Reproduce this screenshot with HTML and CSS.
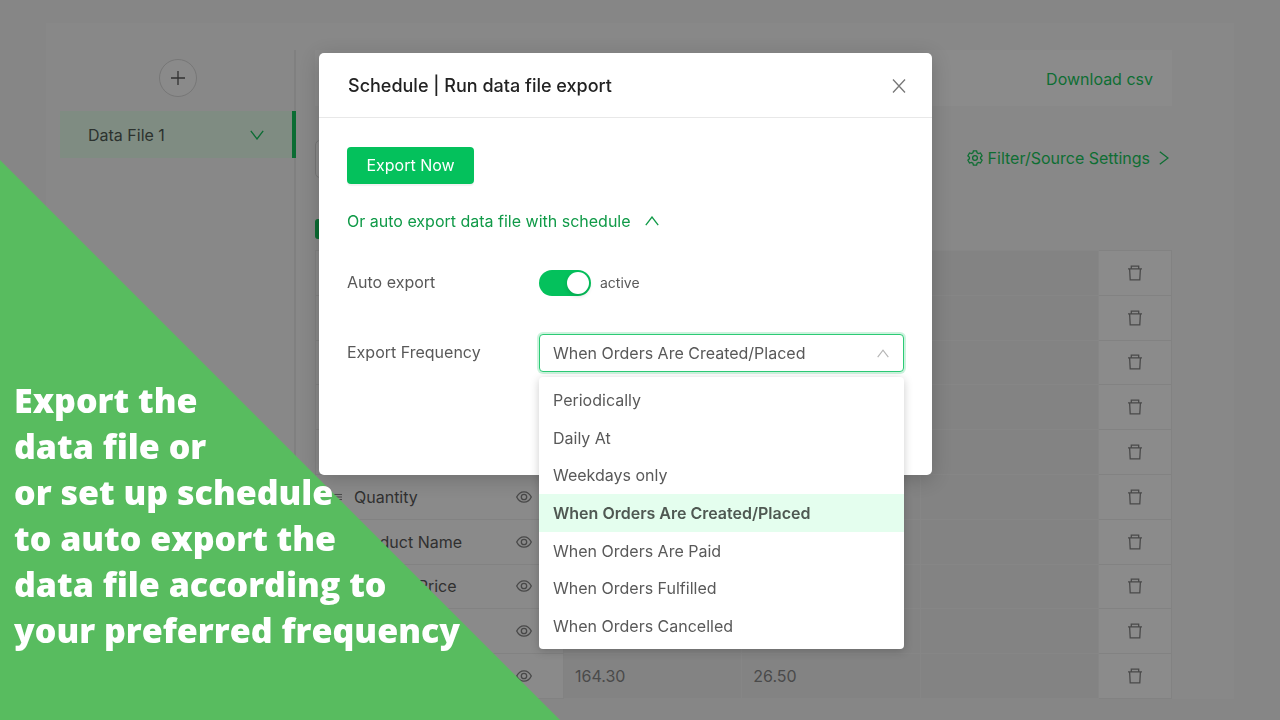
FILE: index.html
```html
<!DOCTYPE html>
<html lang="en">
<head>
    <meta charset="UTF-8">
    <meta name="viewport" content="width=device-width, initial-scale=1.0">
    <title>Schedule | Run data file export</title>
    <link rel="stylesheet" href="styles.css">
</head>
<body>
    <!-- icons -->
    <svg class="sprite" aria-hidden="true">
        <symbol id="i-trash" viewBox="0 0 16 16"><path d="M1 3.800h14M4.300 3.800V1.200h7.400v2.600M2.600 3.800l.6 11h9.600l.6-11" /></symbol>
        <symbol id="i-eye" viewBox="0 0 16 12"><path d="M.7 6C2.400 2.500 4.900.8 8 .8S13.600 2.500 15.300 6C13.600 9.500 11.100 11.200 8 11.200S2.400 9.500.7 6z" /><circle cx="8" cy="6" r="2.700" /></symbol>
        <symbol id="i-down" viewBox="0 0 14 10"><path d="M.8.8L7 9 13.200.8" /></symbol>
        <symbol id="i-up" viewBox="0 0 14 10"><path d="M.8 9.200L7 1l6.200 8.200" /></symbol>
        <symbol id="i-right" viewBox="0 0 10 14"><path d="M.8.8L9 7 .8 13.200" /></symbol>
        <symbol id="i-gear" viewBox="0 0 16 16"><path d="M6.400.8h3.200l.5 2 1.400.8 2-.6 1.600 2.800-1.500 1.400v1.600l1.500 1.400-1.600 2.800-2-.6-1.400.8-.5 2H6.400l-.5-2-1.400-.8-2 .6L.9 10.200l1.500-1.400V7.200L.9 5.800 2.500 3l2 .6 1.400-.8z" /><circle cx="8" cy="8" r="2.400" /></symbol>
        <symbol id="i-drag" viewBox="0 0 16 12"><path d="M0 1.500h16M0 6h16M0 10.500h16" /></symbol>
    </svg>

    <div class="page">
        <aside class="sidebar">
            <button class="add-btn" aria-label="Add data file">
                <svg viewBox="0 0 14 14"><path d="M7 0v14M0 7h14" /></svg>
            </button>
            <a href="#" class="file-item">
                Data File 1
                <svg class="chevron"><use href="#i-down" /></svg>
            </a>
        </aside>

        <main class="main">
            <div class="topbar">
                <a href="#">Download csv</a>
            </div>
            <div class="toolbar">
                <input type="text" class="search" aria-label="File name">
                <a href="#" class="settings">
                    <svg class="gear"><use href="#i-gear" /></svg>
                    Filter/Source Settings
                    <svg class="arrow"><use href="#i-right" /></svg>
                </a>
            </div>
            <input type="checkbox" class="check-all" aria-label="Select all" checked>

            <table class="fields">
                <tr><td class="name"></td><td></td><td></td><td></td><td class="del"><svg><use href="#i-trash" /></svg></td></tr>
                <tr><td class="name"></td><td></td><td></td><td></td><td class="del"><svg><use href="#i-trash" /></svg></td></tr>
                <tr><td class="name"></td><td></td><td></td><td></td><td class="del"><svg><use href="#i-trash" /></svg></td></tr>
                <tr><td class="name"></td><td></td><td></td><td></td><td class="del"><svg><use href="#i-trash" /></svg></td></tr>
                <tr><td class="name"></td><td></td><td></td><td></td><td class="del"><svg><use href="#i-trash" /></svg></td></tr>
                <tr>
                    <td class="name"><div class="cell"><svg class="drag"><use href="#i-drag" /></svg>Quantity<svg class="eye"><use href="#i-eye" /></svg></div></td>
                    <td></td><td></td><td></td>
                    <td class="del"><svg><use href="#i-trash" /></svg></td>
                </tr>
                <tr>
                    <td class="name"><div class="cell"><svg class="drag"><use href="#i-drag" /></svg>Product Name<svg class="eye"><use href="#i-eye" /></svg></div></td>
                    <td></td><td></td><td></td>
                    <td class="del"><svg><use href="#i-trash" /></svg></td>
                </tr>
                <tr>
                    <td class="name"><div class="cell"><svg class="drag"><use href="#i-drag" /></svg>Product Price<svg class="eye"><use href="#i-eye" /></svg></div></td>
                    <td></td><td></td><td></td>
                    <td class="del"><svg><use href="#i-trash" /></svg></td>
                </tr>
                <tr>
                    <td class="name"><div class="cell"><svg class="eye"><use href="#i-eye" /></svg></div></td>
                    <td></td><td></td><td></td>
                    <td class="del"><svg><use href="#i-trash" /></svg></td>
                </tr>
                <tr>
                    <td class="name"><div class="cell"><svg class="eye"><use href="#i-eye" /></svg></div></td>
                    <td>164.30</td><td>26.50</td><td></td>
                    <td class="del"><svg><use href="#i-trash" /></svg></td>
                </tr>
            </table>
        </main>
    </div>

    <div class="overlay">
        <div class="modal" role="dialog" aria-labelledby="modalTitle">
            <div class="modal-header">
                <h2 id="modalTitle">Schedule | Run data file export</h2>
                <button class="close" aria-label="Close">
                    <svg viewBox="0 0 14 14"><path d="M1 .5l12 13M13 .5L1 13.500" /></svg>
                </button>
            </div>
            <div class="modal-body">
                <button class="export-btn">Export Now</button>
                <a href="#" class="schedule-link">
                    Or auto export data file with schedule
                    <svg class="chevron"><use href="#i-up" /></svg>
                </a>
                <div class="form-row">
                    <label for="auto">Auto export</label>
                    <div class="control">
                        <input type="checkbox" id="auto" class="switch" checked>
                        <span class="state">active</span>
                    </div>
                </div>
                <div class="form-row">
                    <label for="frequency">Export Frequency</label>
                    <div class="control">
                        <select id="frequency" class="select">
                            <option>When Orders Are Created/Placed</option>
                        </select>
                        <svg class="select-arrow"><use href="#i-up" /></svg>
                        <ul class="dropdown">
                            <li>Periodically</li>
                            <li>Daily At</li>
                            <li>Weekdays only</li>
                            <li class="selected">When Orders Are Created/Placed</li>
                            <li>When Orders Are Paid</li>
                            <li>When Orders Fulfilled</li>
                            <li>When Orders Cancelled</li>
                        </ul>
                    </div>
                </div>
            </div>
        </div>
    </div>

    <!-- green corner -->
    <div class="promo">
        <p>Export the<br>data file or<br>or set up schedule<br>to auto export the<br>data file according to<br>your preferred frequency</p>
    </div>
</body>
</html>
```

FILE: styles.css
```css
* {
    box-sizing: border-box;
}

body {
    margin: 0;
    min-height: 100vh;
    overflow: hidden;
    background: #868686;
    color: #323232;
    font-family: Inter, "Liberation Sans", sans-serif;
    font-size: 16px;
    line-height: 24px;
}

a {
    color: #0e6e33;
    text-decoration: none;
}

button, input, select {
    margin: 0;
    font: inherit;
    color: inherit;
}

svg {
    fill: none;
    stroke: currentColor;
    stroke-width: 1.3;
}

.sprite {
    display: none;
}

.chevron {
    width: 14px;
    height: 10px;
}

.page {
    display: flex;
    margin: 23px 46px 0;
    padding: 27px 62px 0 14px;
    background: #888;
}

/* sidebar */
.sidebar {
    width: 236px;
    flex-shrink: 0;
    padding-top: 9px;
    background: linear-gradient(#808080, #808080) right / 2px 100% no-repeat;
}

.add-btn {
    display: flex;
    align-items: center;
    justify-content: center;
    width: 38px;
    height: 38px;
    margin: 0 auto 14px;
    padding: 0;
    border: 1px solid #777;
    border-radius: 50%;
    background: #8a8a8a;
}

.add-btn svg {
    width: 14px;
    height: 14px;
}

.file-item {
    display: flex;
    align-items: center;
    justify-content: space-between;
    height: 47px;
    padding: 0 28px;
    border-right: 4px solid #0b6c33;
    background: #7f8c82;
    color: #2c322e;
}

.file-item .chevron {
    color: #0b6c33;
}

/* main */
.main {
    flex: 1;
    margin-left: 19px;
}

.topbar {
    display: flex;
    align-items: center;
    justify-content: flex-end;
    height: 56px;
    padding: 2px 19px 0;
    background: #8b8b8b;
}

.toolbar {
    display: flex;
    align-items: center;
    justify-content: space-between;
    margin-top: 34px;
}

.search {
    width: 300px;
    height: 38px;
    border: 1px solid #777;
    border-radius: 5px;
    background: #8b8b8b;
}

.settings {
    display: flex;
    align-items: center;
    gap: 5px;
    padding: 0 3px 2px 0;
}

.gear {
    width: 16px;
    height: 16px;
}

.arrow {
    width: 10px;
    height: 14px;
    margin-left: 4px;
}

.check-all {
    display: block;
    appearance: none;
    width: 20px;
    height: 20px;
    margin: 41px 0 11px;
    border-radius: 3px;
    background: #0b6c33;
}

.fields {
    width: 100%;
    height: 449px;
    table-layout: fixed;
    border-collapse: collapse;
    color: #4a4a4a;
}

.fields tr {
    height: 44px;
}

.fields td {
    padding: 0 11px;
    border: 1px solid #868686;
    background: #838383;
}

.fields .name {
    width: 248px;
    padding: 0 31px 0 17px;
    border-color: #828282;
    background: #8a8a8a;
    color: #303030;
}

.fields .del {
    width: 73px;
    padding: 0;
    border-color: #828282;
    background: #8b8b8b;
}

.del svg {
    display: block;
    width: 16px;
    height: 16px;
    margin: 0 auto;
}

.cell {
    display: flex;
    align-items: center;
}

.drag {
    width: 9px;
    height: 12px;
    margin-right: 12px;
}

.eye {
    width: 16px;
    height: 12px;
    margin-left: auto;
    color: #484848;
}

/* modal */
.overlay {
    position: fixed;
    inset: 0;
    display: flex;
    justify-content: center;
    align-items: flex-start;
    padding: 53px 29px 0 0;
    color: #595959;
}

.modal {
    width: 613px;
    border-radius: 5px;
    background: #fff;
    box-shadow: 0 4px 20px rgba(0, 0, 0, 0.2);
}

.modal-header {
    display: flex;
    align-items: center;
    justify-content: space-between;
    height: 65px;
    padding: 2px 26px 0 29px;
    border-bottom: 1px solid #e8e8e8;
}

.modal-header h2 {
    margin: 0;
    color: #222;
    font-size: 18px;
    font-weight: 500;
}

.close {
    display: flex;
    padding: 0;
    border: 0;
    background: none;
    color: #777;
}

.close svg {
    width: 14px;
    height: 14px;
}

.modal-body {
    padding: 29px 28px 103px;
}

.export-btn {
    display: block;
    width: 127px;
    height: 37px;
    padding: 0 0 1px;
    border: 0;
    border-radius: 4px;
    background: #04c15c;
    box-shadow: 0 2px 1px rgba(0, 0, 0, 0.05);
    color: #fff;
}

.schedule-link {
    display: flex;
    align-items: center;
    gap: 14px;
    margin: 25px 0 31px;
    color: #109a48;
}

.form-row {
    display: flex;
    align-items: center;
    height: 38px;
}

.form-row + .form-row {
    margin-top: 32px;
}

.form-row label {
    width: 192px;
    flex-shrink: 0;
    padding-bottom: 2px;
}

.control {
    position: relative;
    display: flex;
    flex: 1;
    align-items: center;
}

.switch {
    appearance: none;
    width: 52px;
    height: 26px;
    padding: 2px;
    border-radius: 13px;
    background: #04c15c;
}

.switch::before {
    content: "";
    display: block;
    width: 22px;
    height: 22px;
    margin-left: auto;
    border-radius: 50%;
    background: #fff;
    box-shadow: 0 2px 4px rgba(0, 60, 20, 0.2);
}

.state {
    margin-left: 9px;
    font-size: 14px;
}

.select {
    appearance: none;
    width: 100%;
    height: 38px;
    padding: 0 13px;
    border: 1px solid #2ccb75;
    border-radius: 4px;
    outline: 0;
    background: #fff;
    box-shadow: 0 0 0 2px rgba(4, 193, 92, 0.2);
}

.select-arrow {
    position: absolute;
    right: 15px;
    width: 12px;
    height: 9px;
    color: #b5b5b5;
}

.dropdown {
    position: absolute;
    top: 43px;
    left: 0;
    right: 0;
    display: flex;
    flex-direction: column;
    height: 272px;
    margin: 0;
    padding: 4px 0;
    border-radius: 4px;
    background: #fff;
    box-shadow: 0 2px 10px rgba(0, 0, 0, 0.2);
    list-style: none;
}

.dropdown li {
    display: flex;
    flex: 1;
    align-items: center;
    padding: 0 14px;
}

.dropdown .selected {
    background: #e4feee;
    font-weight: 600;
    color: #4f5852;
}

/* promo corner */
.promo {
    position: fixed;
    left: 0;
    bottom: 0;
    width: 560px;
    height: 560px;
    padding: 217px 14px 0;
}

.promo::before {
    content: "";
    position: absolute;
    inset: 0;
    background: #58bc5f;
    clip-path: polygon(0 0, 100% 100%, 0 100%);
}

.promo p {
    position: relative;
    margin: 0;
    color: #fff;
    font-family: "Open Sans", sans-serif;
    font-size: 34px;
    font-weight: 800;
    line-height: 46px;
}
```
